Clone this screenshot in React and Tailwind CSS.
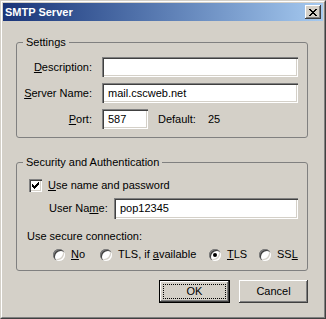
import React from 'react';

const sunken =
  'shadow-[inset_1px_1px_0_#808080,inset_2px_2px_0_#404040,inset_-1px_-1px_0_#ffffff,inset_-2px_-2px_0_#d4d0c8]';
const raised =
  'shadow-[inset_-1px_-1px_0_#404040,inset_1px_1px_0_#ffffff,inset_-2px_-2px_0_#808080,inset_2px_2px_0_#d4d0c8]';

function CloseIcon() {
  // classic 8x7 pixel X
  const rows = ['XX....XX', '.XX..XX.', '..XXXX..', '...XX...', '..XXXX..', '.XX..XX.', 'XX....XX'];
  return (
    <svg width="8" height="7" viewBox="0 0 8 7" shapeRendering="crispEdges">
      {rows.map((r, y) =>
        r.split('').map((c, x) => (c === 'X' ? <rect key={x + '-' + y} x={x} y={y} width="1" height="1" fill="#000" /> : null))
      )}
    </svg>
  );
}

function Check() {
  const rows = ['......X', '.....XX', 'X...XXX', 'XX.XXX.', 'XXXXX..', '.XXX...', '..X....'];
  return (
    <svg width="7" height="7" viewBox="0 0 7 7" shapeRendering="crispEdges">
      {rows.map((r, y) =>
        r.split('').map((c, x) => (c === 'X' ? <rect key={x + '-' + y} x={x} y={y} width="1" height="1" fill="#000" /> : null))
      )}
    </svg>
  );
}

function Radio({ checked, label, className }) {
  return (
    <div className={'flex items-center ' + (className || '')}>
      <div className={'w-[12px] h-[12px] rounded-full bg-white flex items-center justify-center ' + sunken}>
        {checked && <div className="w-[4px] h-[4px] rounded-full bg-black"></div>}
      </div>
      <span className="ml-[6px]">{label}</span>
    </div>
  );
}

function TextBox({ value, className }) {
  return (
    <div className={'bg-white h-[20px] flex items-center pl-[6px] ' + sunken + ' ' + (className || '')}>
      {value}
    </div>
  );
}

export default function App() {
  return (
    <div
      className="w-[326px] h-[319px] bg-[#d4d0c8] text-black text-[11px] leading-[13px] border border-[#d4d0c8] border-r-[#404040] border-b-[#404040]"
      style={{ fontFamily: '"Liberation Sans", Arial, sans-serif' }}
    >
      <div className="h-full border border-white border-r-[#808080] border-b-[#808080] p-[1px] flex flex-col">
        {/* title bar */}
        <div className="h-[18px] flex items-center justify-between bg-gradient-to-r from-[#1a3478] to-[#a6caf0] pl-[2px]">
          <span className="text-white font-bold">SMTP Server</span>
          <div className={'w-[16px] h-[14px] mr-[2px] bg-[#d4d0c8] flex items-center justify-center ' + raised}>
            <CloseIcon />
          </div>
        </div>

        <div className="pl-[13px] pr-[15px]">
          {/* Settings */}
          <fieldset className="mt-[14px] border border-[#808080] rounded-[3px] pr-[9px] pb-[8px]">
            <legend className="ml-[6px] px-[3px] leading-[14px]">Settings</legend>
            <div className="pt-[8px] grid grid-cols-[75px_1fr] gap-x-[10px] gap-y-[6px] items-center">
              <span className="text-right">
                <u>D</u>escription:
              </span>
              <TextBox value="" />
              <span className="text-right">
                <u>S</u>erver Name:
              </span>
              <TextBox value="mail.cscweb.net" />
              <span className="text-right">
                <u>P</u>ort:
              </span>
              <div className="flex items-center">
                <TextBox value="587" className="w-[46px] pl-[4px]" />
                <span className="ml-[10px] w-[50px]">Default:</span>
                <span>25</span>
              </div>
            </div>
          </fieldset>

          {/* Security */}
          <fieldset className="mt-[17px] border border-[#808080] rounded-[3px] pr-[9px] pb-[9px]">
            <legend className="ml-[6px] px-[3px] leading-[14px]">Security and Authentication</legend>
            <div className="pt-[10px] pl-[12px] flex items-center">
              <div className={'w-[13px] h-[13px] bg-white flex items-center justify-center ' + sunken}>
                <Check />
              </div>
              <span className="ml-[6px]">
                <u>U</u>se name and password
              </span>
            </div>
            <div className="mt-[6px] pl-[32px] flex items-center">
              <span className="w-[65px]">
                User Na<u>m</u>e:
              </span>
              <TextBox value="pop12345" className="flex-1 h-[21px]" />
            </div>
            <div className="mt-[11px] pl-[10px]">Use secure connection:</div>
            <div className="mt-[5px] pl-[36px] flex items-center">
              <Radio className="w-[47px]" label={<><u>N</u>o</>} />
              <Radio className="w-[109px]" label={<>TLS, if <u>a</u>vailable</>} />
              <Radio className="w-[50px]" checked label={<><u>T</u>LS</>} />
              <Radio label={<>SS<u>L</u></>} />
            </div>
          </fieldset>

          {/* buttons */}
          <div className="mt-[9px] flex justify-end gap-[9px]">
            <div className="w-[71px] h-[23px] border border-black bg-[#d4d0c8]">
              <div className={'w-full h-full p-[3px] ' + raised}>
                <div className="w-full h-full border border-dotted border-black flex items-center justify-center">
                  OK
                </div>
              </div>
            </div>
            <div className={'w-[69px] h-[23px] bg-[#d4d0c8] flex items-center justify-center ' + raised}>Cancel</div>
          </div>
        </div>
      </div>
    </div>
  );
}
